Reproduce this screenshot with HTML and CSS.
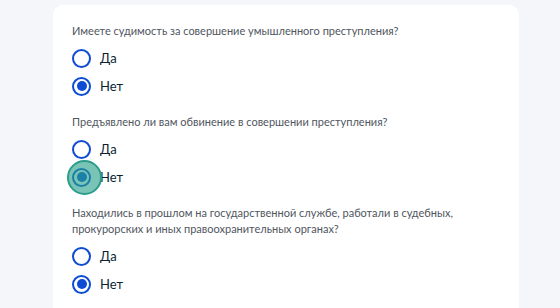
FILE: index.html
```html
<!DOCTYPE html>
<html lang="ru">
<head>
<meta charset="utf-8">
<link rel="stylesheet" href="styles.css">
</head>
<body>
<div class="card">
  <div class="question">
    <p class="q-text">Имеете судимость за совершение умышленного преступления?</p>
    <div class="options">
      <label class="option"><span class="radio"></span><span class="label">Да</span></label>
      <label class="option"><span class="radio checked"></span><span class="label">Нет</span></label>
    </div>
  </div>
  <div class="question">
    <p class="q-text">Предъявлено ли вам обвинение в совершении преступления?</p>
    <div class="options">
      <label class="option"><span class="radio"></span><span class="label">Да</span></label>
      <label class="option"><span class="radio checked"><span class="touch"></span></span><span class="label">Нет</span></label>
    </div>
  </div>
  <div class="question">
    <p class="q-text">Находились в прошлом на государственной службе, работали в судебных, прокурорских и иных правоохранительных органах?</p>
    <div class="options">
      <label class="option"><span class="radio"></span><span class="label">Да</span></label>
      <label class="option"><span class="radio checked"></span><span class="label">Нет</span></label>
    </div>
  </div>
</div>
</body>
</html>
```
FILE: styles.css
```css
html, body {
  margin: 0;
  padding: 0;
}
body {
  background: #f4f6fa;
  font-family: Lato, "Noto Sans", sans-serif;
  height: 308px;
  overflow: hidden;
  padding-top: 5px;
  box-sizing: border-box;
}
.card {
  margin-left: 53px;
  width: 466px;
  background: #ffffff;
  border-radius: 10px;
  padding: 18px 19px 20px;
  box-sizing: border-box;
}
.question {
  margin-bottom: 18px;
}
.q-text {
  margin: 0 0 9px;
  font-size: 11px;
  line-height: 16px;
  color: #4f565e;
  max-width: 420px;
}
.options {
  display: flex;
  flex-direction: column;
  gap: 8px;
}
.option {
  display: flex;
  align-items: center;
  gap: 9px;
  height: 20px;
}
.radio {
  position: relative;
  width: 19px;
  height: 19px;
  border: 2px solid #0d4cd3;
  border-radius: 50%;
  box-sizing: border-box;
  flex: none;
}
.radio.checked::after {
  content: "";
  position: absolute;
  left: 2.5px;
  top: 2.5px;
  width: 10px;
  height: 10px;
  border-radius: 50%;
  background: #0d4cd3;
}
.label {
  font-size: 13px;
  line-height: 20px;
  color: #0b1f33;
}
.touch {
  position: absolute;
  left: -7px;
  top: -10px;
  width: 35px;
  height: 35px;
  border-radius: 50%;
  border: 2px solid #2c9d89;
  background: rgba(38, 160, 138, 0.62);
  box-sizing: border-box;
  z-index: 2;
}
```
